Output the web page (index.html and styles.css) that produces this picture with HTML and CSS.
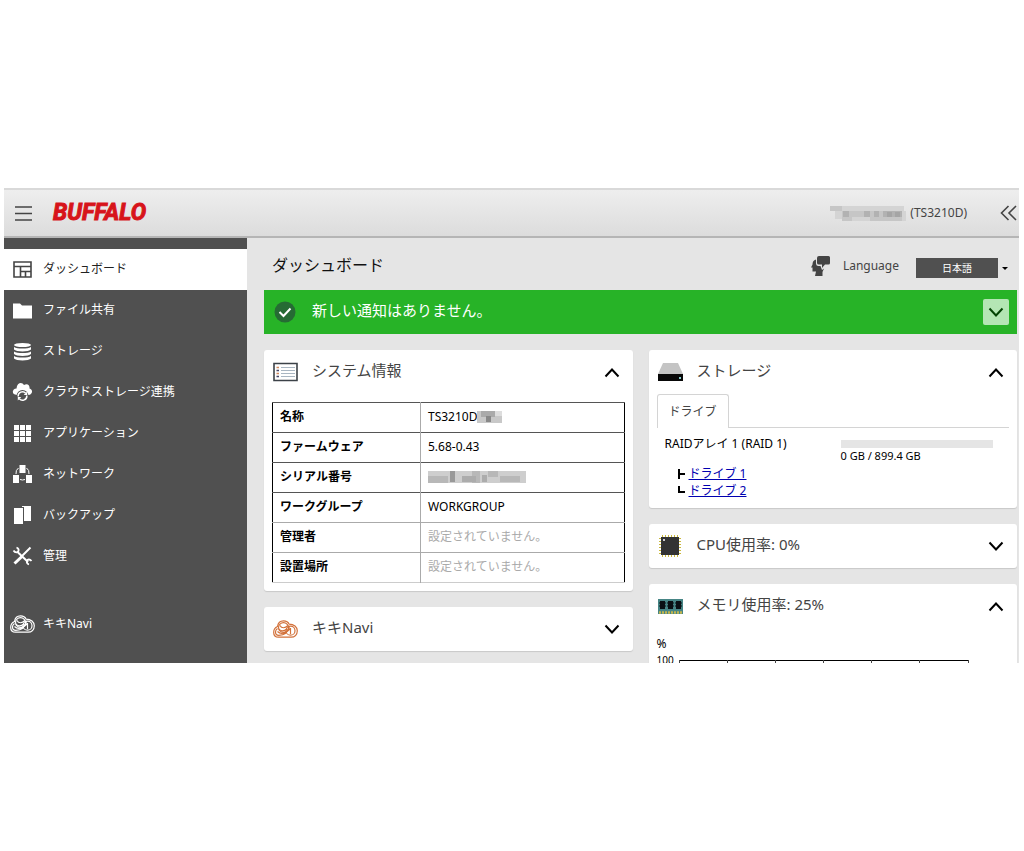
FILE: index.html
```html
<!DOCTYPE html>
<html lang="ja">
<head>
<meta charset="utf-8">
<title>ダッシュボード</title>
<link rel="stylesheet" href="styles.css">
</head>
<body>
<svg class="defs" aria-hidden="true">
  <symbol id="up" viewBox="0 0 16 16"><path d="M1.500 12.500 8 5.500l6.500 7" fill="none" stroke="currentColor" stroke-width="2"/></symbol>
  <symbol id="down" viewBox="0 0 16 16"><path d="M1.500 4.500 8 11.500l6.500-7" fill="none" stroke="currentColor" stroke-width="2"/></symbol>
  <symbol id="navi" viewBox="0 0 25 18"><g fill="none" stroke="currentColor" stroke-width="1.200"><path d="M4.500 6.500C5 3 7.500.8 10.500.8c2.800 0 4.800 1.300 5.600 3.300 4.800 0 8.200 2.900 8.200 6.700 0 3.900-2.700 6.400-6.200 6.400H5.500c-3 0-4.800-2-4.800-4.800 0-2.800 1.500-4.900 3.800-5.900z"/><ellipse cx="10.500" cy="7.500" rx="5" ry="4.800"/><ellipse cx="17.500" cy="10.700" rx="4.500" ry="4.500"/><path d="M4.500 8.500C3 9.500 2.500 10.800 2.500 12c0 2 1.300 3.300 3.300 3.300 5.500 0 9.200-3 10.700-9M7 5.500c1.500 3 5 3 8 0M4.500 11.500c3 3 8 2.500 13-3M6 9c2 2.500 4.500 2.500 8 0M17.500 8v6"/></g></symbol>
</svg>
<div class="app">
  <header class="topbar">
    <button class="plain menu-btn" aria-label="メニュー"><svg width="17" height="15" viewBox="0 0 17 15"><path d="M0 1h17M0 7.500h17M0 14h17" stroke="#444" stroke-width="1.500"/></svg></button>
    <a class="logo" href="#">BUFFALO</a>
    <div class="device">
      <svg width="76" height="15" viewBox="0 0 76 15" aria-hidden="true"><path fill="#c6c6c6" d="M0 0h12v5H0zM12 5h60v10H12z"/><path fill="#d4d4d4" d="M12 0h62v5H12zM5 5h7v8H5zM22 11h18v4H22zM72 5h4v10h-4z"/><path fill="#b2b2b2" d="M13 5h6v6h-6zM34 5h6v6h-6zM44 5h5v6h-5zM53 5h19v6H53z"/><path fill="#a5a5a5" d="M57 6h5v5h-5zM65 6h5v5h-5z"/></svg>
      <span>(TS3210D)</span>
    </div>
    <button class="plain fold-btn" aria-label="閉じる"><svg width="17" height="16" viewBox="0 0 17 16"><path d="M8.500 1 1.500 8l7 7M16 1 9 8l7 7" fill="none" stroke="#444" stroke-width="1.600"/></svg></button>
  </header>
  <div class="body">
    <nav class="side">
      <a class="item active" href="#"><svg width="25" height="20" viewBox="0 0 25 20"><path d="M4 3h17v15H4zM4 7.500h17M10.500 7.500V18M10.500 12.500H21M15.500 12.500V18" fill="none" stroke="#444" stroke-width="1.600"/></svg>ダッシュボード</a>
      <a class="item" href="#"><svg width="25" height="20" viewBox="0 0 25 20"><path d="M3 3.500h7l2 2h10v13H3z" fill="#fff"/></svg>ファイル共有</a>
      <a class="item" href="#"><svg width="25" height="20" viewBox="0 0 25 20"><g fill="#fff"><ellipse cx="12.500" cy="4" rx="8.500" ry="2"/><path id="disk" d="M4 6c3 2 14 2 17 0v2.500c-2 2.500-15 2.500-17 0z"/><use href="#disk" y="4.500"/><use href="#disk" y="9"/></g></svg>ストレージ</a>
      <a class="item" href="#"><svg width="25" height="20" viewBox="0 0 25 20"><path d="M7 13c-6 0-5-6.500-.5-6.500C7 .5 12-.5 14 3c4-2 6 1 5.500 3.500 4 1 3 6.500-1 6.500z" fill="#fff"/><circle cx="12.500" cy="14" r="6" fill="#505050"/><path d="M8.200 14.500a4.300 4.300 0 0 1 7.500-3.300M16.800 13.500a4.300 4.300 0 0 1-7.500 3.300" fill="none" stroke="#fff" stroke-width="1.500"/><path d="M17.200 9.500v3.500h-3.500zM7.800 18.500V15h3.500z" fill="#fff"/></svg>クラウドストレージ連携</a>
      <a class="item" href="#"><svg width="25" height="20" viewBox="0 0 25 20"><path fill="#fff" d="M4 2h5v5H4zM10 2h5v5h-5zM16 2h5v5h-5zM4 8h5v5H4zM10 8h5v5h-5zM16 8h5v5h-5zM4 14h5v5H4zM10 14h5v5h-5zM16 14h5v5h-5z"/></svg>アプリケーション</a>
      <a class="item" href="#"><svg width="25" height="20" viewBox="0 0 25 20"><path fill="#fff" d="M9.500 1h6v8h-6zM3 11h6v8H3zM16 11h6v8h-6z"/><path d="M8.500 4Q5.500 6 6 10M16.500 4Q19.500 6 19 10M10 15.500q2.500 1 5 0" fill="none" stroke="#fff"/></svg>ネットワーク</a>
      <a class="item" href="#"><svg width="25" height="20" viewBox="0 0 25 20"><path fill="#fff" d="M4 3h9v16H4zM12 1h9v15h-7V2h-2z"/></svg>バックアップ</a>
      <a class="item" href="#"><svg width="25" height="20" viewBox="0 0 25 20"><path d="M7 5.500 18 16" stroke="#fff" stroke-width="2"/><path d="M20.500 1.500 12 10" stroke="#fff" stroke-width="2"/><path d="M12.500 10 4.500 17.500" stroke="#fff" stroke-width="3"/><path d="M3.500 4.500C5 7 8 7 8.500 5S8 2 6.500 1.500M21.500 15c-1.500-2-4-2-4.500 0s.5 3 2 3.500" fill="none" stroke="#fff" stroke-width="1.800"/></svg>管理</a>
      <a class="item navi" href="#"><svg width="25" height="18"><use href="#navi"/></svg>キキNavi</a>
    </nav>
    <main class="main">
      <div class="titlebar">
        <h1>ダッシュボード</h1>
        <svg width="20" height="20" viewBox="0 0 20 20" aria-hidden="true"><path fill="#444" d="M6 2q0-2 2-2h9.500q1.500 0 1.500 1.500V7q0 1.500-1.500 1.500H14l-3 3.500V8.500H8Q6 8.500 6 7z"/><path fill="#444" d="M5 3.500C2.500 4 1.500 6 1.500 8.500L0 11.500h1.500v4H5L4 20h7.500v-4l1.500-3.500-2 1.500-1.500-4H7Q5 9.500 5 7.500z"/></svg>
        <label for="lang">Language</label>
        <span class="lang"><select id="lang"><option>日本語</option></select></span>
      </div>
      <div class="notice">
        <svg width="22" height="22" viewBox="0 0 22 22"><circle cx="11" cy="11" r="10.500" fill="#266b34"/><path d="m5.500 11 4 4 7-7.500" fill="none" stroke="#fff" stroke-width="2"/></svg>
        <p>新しい通知はありません。</p>
        <button class="notice-btn" aria-label="開く"><svg width="16" height="16"><use href="#down"/></svg></button>
      </div>
      <div class="columns">
        <div class="column">
          <section class="card">
            <div class="head"><svg width="25" height="20" viewBox="0 0 25 20"><path d="M1 1.500h23v17H1z" fill="#fff" stroke="#3c4248" stroke-width="1.600"/><path d="M8 5.500h14M8 8.500h14M8 11.500h14M8 14.500h14" stroke="#a9b6c2"/><path d="M3.500 5.500H6M3.500 11.500H6" stroke="#d08a60" stroke-width="1.500"/><path d="M3.500 8.500H6M3.500 14.500H6" stroke="#446" stroke-width="1.500"/></svg><h2>システム情報</h2><button class="plain" aria-label="閉じる"><svg width="16" height="16"><use href="#up"/></svg></button></div>
            <table class="info">
              <tr><th scope="row">名称</th><td>TS3210D<svg width="25" height="12" viewBox="0 0 25 12" aria-hidden="true"><path fill="#c8c8c8" d="M0 0h25v12H0z"/><path fill="#aaa" d="M4 0h14v6H4z"/><path fill="#888" d="M9 5h5v6H9z"/><path fill="#ddd" d="M18 0h7v5h-7z"/></svg></td></tr>
              <tr><th scope="row">ファームウェア</th><td>5.68-0.43</td></tr>
              <tr><th scope="row">シリアル番号</th><td><svg width="98" height="12" viewBox="0 0 98 12" aria-hidden="true"><path fill="#cecece" d="M0 0h98v12H0z"/><path fill="#b8b8b8" d="M0 5h20v7H0zM44 0h8v12h-8zM60 0h10v6H60zM72 5h20v6H72z"/><path fill="#999" d="M22 0h5v11h-5z"/><path fill="#acacac" d="M34 5h14v6H34zM54 4h5v7h-5z"/></svg></td></tr>
              <tr><th scope="row">ワークグループ</th><td>WORKGROUP</td></tr>
              <tr class="unset"><th scope="row">管理者</th><td>設定されていません。</td></tr>
              <tr class="unset"><th scope="row">設置場所</th><td>設定されていません。</td></tr>
            </table>
          </section>
          <section class="card">
            <div class="head"><svg class="orange" width="25" height="18"><use href="#navi"/></svg><h2>キキNavi</h2><button class="plain" aria-label="開く"><svg width="16" height="16"><use href="#down"/></svg></button></div>
          </section>
        </div>
        <div class="column">
          <section class="card">
            <div class="head"><svg width="25" height="18" viewBox="0 0 25 18"><path fill="#c4c4c4" d="M5 0h15l5 11H0z"/><path fill="#080808" d="M0 11h25v7H0z"/><path fill="#8cc" d="M21 14h2v2h-2z"/></svg><h2>ストレージ</h2><button class="plain" aria-label="閉じる"><svg width="16" height="16"><use href="#up"/></svg></button></div>
            <div class="tabs"><button class="tab">ドライブ</button></div>
            <div class="array">
              <div class="drives">
                <p>RAIDアレイ 1 (RAID 1)</p>
                <ul>
                  <li><svg width="7" height="12" viewBox="0 0 7 12"><path d="M1 1v10M1 6h6" stroke="#000" stroke-width="2"/></svg><a href="#">ドライブ 1</a></li>
                  <li><svg width="7" height="12" viewBox="0 0 7 12"><path d="M1 1v6M0 7h7" stroke="#000" stroke-width="2"/></svg><a href="#">ドライブ 2</a></li>
                </ul>
              </div>
              <div class="usage"><div class="bar"></div>0 GB / 899.4 GB</div>
            </div>
          </section>
          <section class="card">
            <div class="head"><svg width="25" height="24" viewBox="0 0 25 24"><path d="M4.500 1v22M7.500 1v22M10.500 1v22M13.500 1v22M16.500 1v22M19.500 1v22M1 4.500h22M1 7.500h22M1 10.500h22M1 13.500h22M1 16.500h22M1 19.500h22" stroke="#c9b83c"/><path fill="#333" d="M3 3h18v18H3z"/><circle cx="6" cy="6" r="1" fill="#fff"/></svg><h2>CPU使用率: 0%</h2><button class="plain" aria-label="開く"><svg width="16" height="16"><use href="#down"/></svg></button></div>
          </section>
          <section class="card">
            <div class="head"><svg width="25" height="15" viewBox="0 0 25 15"><path fill="#468585" d="M0 0h25v15H0z"/><path fill="#0a1114" d="M2 2h5v8H2zM10 2h5v8h-5zM18 2h5v8h-5z"/><path d="M1 4h7M1 7h7M9 4h7M9 7h7M17 4h7M17 7h7" stroke="#0a1114"/><path d="M1 13.500h23" stroke="#c5b64c" stroke-width="2.500" stroke-dasharray="2 1"/></svg><h2>メモリ使用率: 25%</h2><button class="plain" aria-label="閉じる"><svg width="16" height="16"><use href="#up"/></svg></button></div>
            <div class="chart">
              <div class="unit">%</div>
              <div class="plot"><span>100</span><svg width="290" height="100" viewBox="0 0 290 100"><path d="M0 .5h290" stroke="#000"/><path d="M.5 0v100M48.500 0v100M96.500 0v100M144.500 0v100M192.500 0v100M240.500 0v100M289.500 0v100" stroke="#444"/></svg></div>
            </div>
          </section>
        </div>
      </div>
    </main>
  </div>
</div>
</body>
</html>
```
FILE: styles.css
```css
* { box-sizing: border-box; }
body {
  margin: 0;
  padding: 188px 5px 188px 4px;
  background: #fff;
  color: #000;
  font: 12px/16px "Noto Sans", "Noto Sans CJK JP", sans-serif;
}
.defs { position: absolute; width: 0; height: 0; }
svg { display: block; flex: none; }
h1, h2, p, ul { margin: 0; padding: 0; font-weight: 400; }
button, select { font: inherit; color: inherit; }
.plain { display: flex; padding: 0; border: 0; background: none; }
.app {
  display: flex;
  flex-direction: column;
  height: calc(100vh - 376px);
  overflow: hidden;
  background: #e5e5e5;
}
.topbar {
  display: flex;
  flex: none;
  align-items: center;
  height: 50px;
  padding: 0 2px 0 11px;
  border-top: 2px solid #d9d9d9;
  border-bottom: 2px solid #b5b5b5;
  background: linear-gradient(#eee, #dcdcdc);
}
.logo {
  margin-left: 21px;
  color: #d7141a;
  font: italic 700 23px/32px Roboto, sans-serif;
  -webkit-text-stroke: 1px #d7141a;
  text-decoration: none;
}
.device { display: flex; align-items: center; gap: 4px; margin-left: auto; color: #444; }
.fold-btn { margin-left: 33px; }
.body { display: flex; flex: 1; min-height: 0; }
.side { flex: none; width: 243px; padding-top: 11px; background: #505050; }
.item {
  display: flex;
  align-items: center;
  gap: 8px;
  height: 41px;
  padding: 0 6px 2px;
  color: #fff;
  text-decoration: none;
}
.active { background: #fff; color: #222; }
.navi { margin-top: 27px; }
.main { flex: 1; min-width: 0; padding: 0 2px 0 17px; }
.titlebar { display: flex; align-items: center; height: 52px; padding: 4px 9px 0 8px; color: #444; }
h1 { margin-right: auto; padding-bottom: 2px; color: #111; font-size: 16px; line-height: 24px; }
.titlebar label { margin: 0 17px 0 12px; }
.lang { display: flex; align-items: center; gap: 4px; padding-top: 4px; }
.lang::after { content: ""; border: 3px solid transparent; border-top-color: #000; border-bottom: 0; }
.lang select {
  appearance: none;
  width: 82px;
  height: 20px;
  padding: 0;
  border: 0;
  border-radius: 0;
  background: #505050;
  color: #fff;
  font-size: 10px;
  text-align-last: center;
}
.notice {
  display: flex;
  align-items: center;
  gap: 16px;
  height: 44px;
  padding: 0 8px 0 10px;
  background: #27b327;
  color: #fff;
  font-size: 15px;
}
.notice p { padding-bottom: 4px; }
.notice-btn {
  display: flex;
  align-items: center;
  justify-content: center;
  width: 26px;
  height: 26px;
  margin-left: auto;
  padding: 0;
  border: 0;
  border-radius: 2px;
  background: #b4e6b4;
  color: #044404;
}
.columns { display: grid; grid-template-columns: 1fr 1fr; gap: 16px; padding-top: 16px; }
.column { display: flex; flex-direction: column; gap: 16px; }
.card { padding: 0 8px; border-radius: 3px; background: #fff; box-shadow: 0 1px 1px #c8c8c8; }
.head { display: flex; align-items: center; gap: 14px; height: 44px; padding: 0 5px 0 1px; }
h2 { padding-bottom: 4px; color: #444; font-size: 15px; line-height: 20px; }
.head button { margin-left: auto; }
.orange { color: #d2713a; }
.info {
  width: 100%;
  margin: 8px 0;
  border-collapse: collapse;
  border: 1px solid #000;
  border-bottom: 1px solid #ccc;
}
.info tr { height: 30px; border-top: 1px solid #555; }
.info .unset { border-top-color: #aaa; }
.info th, .info td { padding: 0 7px 2px; text-align: left; }
.info th { width: 148px; border-right: 1px solid #aaa; }
.info td svg { display: inline-block; vertical-align: middle; }
.unset td { color: #aaa; }
.tabs { display: flex; border-bottom: 1px solid #d4d4d4; }
.tab {
  height: 34px;
  margin-bottom: -1px;
  padding: 0 11px;
  border: 1px solid #d4d4d4;
  border-bottom: 0;
  border-radius: 3px 3px 0 0;
  background: #fff;
  color: #444;
}
.array { display: grid; grid-template-columns: 176px 1fr; padding: 8px 16px 9px 8px; }
.drives ul { padding: 13px 0 0 13px; list-style: none; }
.drives li { display: flex; align-items: center; gap: 4px; line-height: 17px; }
.drives a { color: #0000b0; }
.usage { font-size: 11px; line-height: 16px; }
.bar { height: 8px; margin-top: 4px; background: #e5e5e5; }
.chart { padding-top: 8px; }
.plot { display: flex; gap: 5px; font-size: 10px; }
.plot svg { margin-top: 8px; }
```
